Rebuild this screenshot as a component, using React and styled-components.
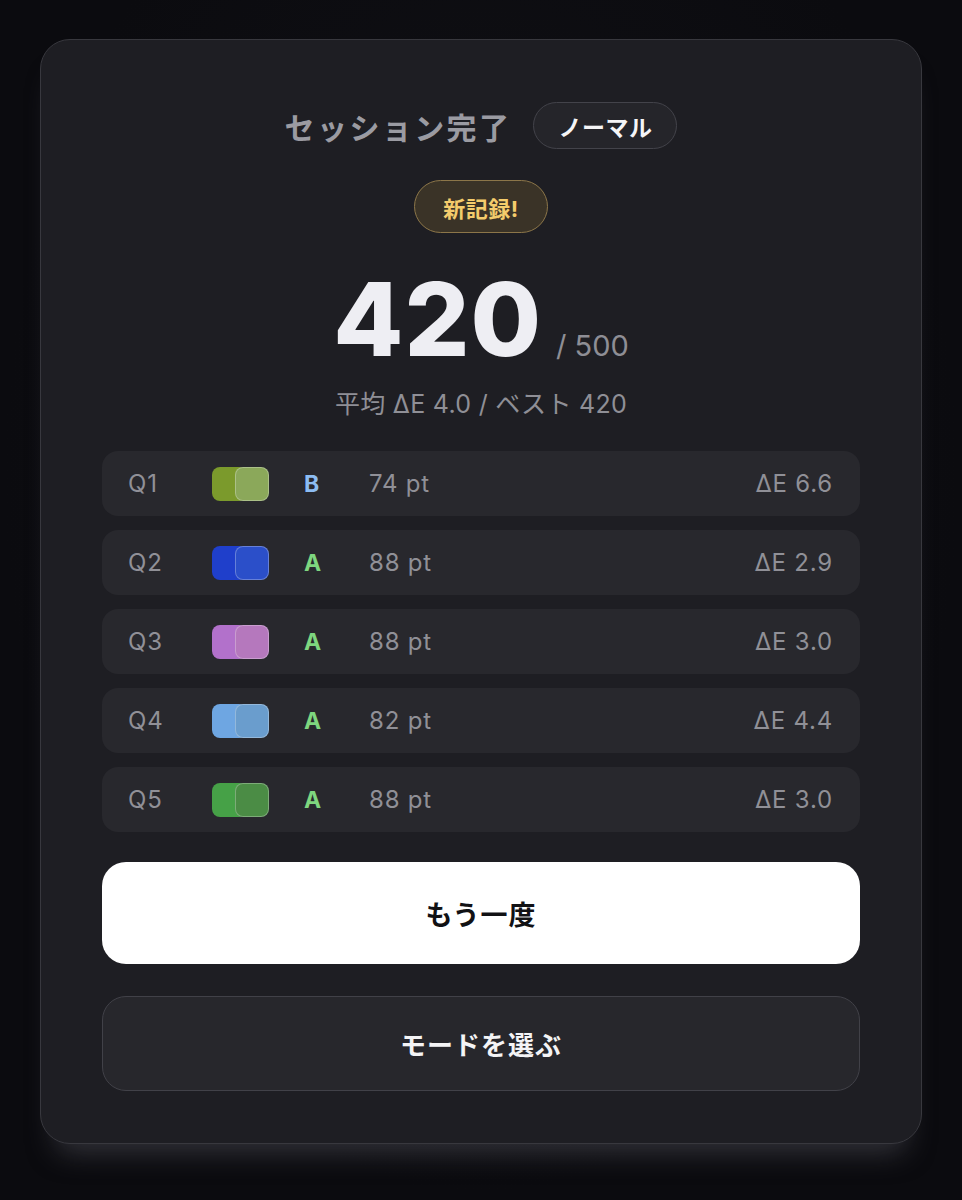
import React from 'react';
import styled, { createGlobalStyle } from 'styled-components';

const results = [
  { q: 'Q1', target: '#7b9a2c', guess: '#8ba85a', grade: 'B', pts: 74, de: '6.6' },
  { q: 'Q2', target: '#1f3fcb', guess: '#2b4fc9', grade: 'A', pts: 88, de: '2.9' },
  { q: 'Q3', target: '#b271cb', guess: '#b578bd', grade: 'A', pts: 88, de: '3.0' },
  { q: 'Q4', target: '#6ea6e2', guess: '#6a9dcd', grade: 'A', pts: 82, de: '4.4' },
  { q: 'Q5', target: '#46a147', guess: '#4b8c45', grade: 'A', pts: 88, de: '3.0' },
];

const gradeColors = { A: '#7ed67f', B: '#8cbcf2' };

function App() {
  return (
    <>
      <GlobalStyle />
      <Page>
        <Card>
          <TitleRow>
            <Title>セッション完了</Title>
            <ModeBadge>ノーマル</ModeBadge>
          </TitleRow>
          <RecordBadge>新記録!</RecordBadge>
          <ScoreLine>
            <BigScore>420</BigScore>
            <MaxScore>/ 500</MaxScore>
          </ScoreLine>
          <Summary>平均 ΔE 4.0 / ベスト 420</Summary>
          <List>
            {results.map((r) => (
              <Row key={r.q}>
                <QLabel>{r.q}</QLabel>
                <Swatch>
                  <Chip style={{ background: r.target }} />
                  <GuessChip style={{ background: r.guess }} />
                </Swatch>
                <Grade $grade={r.grade}>{r.grade}</Grade>
                <Points>{r.pts} pt</Points>
                <Delta>ΔE {r.de}</Delta>
              </Row>
            ))}
          </List>
          <PrimaryButton>もう一度</PrimaryButton>
          <SecondaryButton>モードを選ぶ</SecondaryButton>
        </Card>
      </Page>
    </>
  );
}

export default App;

const GlobalStyle = createGlobalStyle`
  body {
    margin: 0;
    background: #0b0b0f;
    font-family: Inter, "Noto Sans CJK JP", sans-serif;
    color: #ececf0;
  }
`;

const Page = styled.div`
  padding: 39px 40px 55px;
  min-height: 1200px;
  box-sizing: border-box;
  background: radial-gradient(ellipse at 50% 40%, #111116 0%, #0b0b0f 70%);
`;

const Card = styled.div`
  background: #1e1e23;
  border: 1.5px solid #38383e;
  border-radius: 30px;
  padding: 62px 61px 52px;
  display: flex;
  flex-direction: column;
  align-items: center;
  box-shadow: 0 24px 28px -16px rgba(78, 78, 86, 0.6);
`;

const TitleRow = styled.div`
  display: flex;
  align-items: center;
  gap: 22px;
`;

const Title = styled.h1`
  margin: 0;
  font-size: 30px;
  font-weight: 700;
  color: #9b9ba2;
  letter-spacing: 2.4px;
`;

const ModeBadge = styled.span`
  display: inline-flex;
  align-items: center;
  height: 45px;
  padding: 0 24px;
  border-radius: 24px;
  background: #25252a;
  border: 1.5px solid #43434a;
  font-size: 23px;
  font-weight: 700;
  color: #f5f5f7;
  letter-spacing: 0.5px;
`;

const RecordBadge = styled.span`
  margin-top: 31px;
  display: inline-flex;
  align-items: center;
  height: 51px;
  padding: 0 28px;
  border-radius: 27px;
  background: #3a3327;
  border: 1.5px solid #8c7649;
  font-size: 22px;
  font-weight: 700;
  color: #f4cc6c;
  letter-spacing: 0.5px;
`;

const ScoreLine = styled.div`
  margin-top: 30px;
  display: flex;
  align-items: baseline;
  gap: 14px;
`;

const BigScore = styled.span`
  font-size: 102px;
  line-height: 112px;
  font-weight: 800;
  color: #eeeef3;
  letter-spacing: 1px;
`;

const MaxScore = styled.span`
  font-size: 29px;
  color: #8e8e95;
`;

const Summary = styled.div`
  margin-top: 9px;
  font-size: 25px;
  letter-spacing: 0.3px;
  color: #8f8f96;
`;

const List = styled.div`
  margin-top: 31px;
  width: 100%;
  display: flex;
  flex-direction: column;
  gap: 14px;
`;

const Row = styled.div`
  height: 65px;
  border-radius: 16px;
  background: #28282d;
  display: grid;
  grid-template-columns: 84px 92px 65px 1fr auto;
  align-items: center;
  padding: 0 27px 0 26px;
  font-size: 24px;
  letter-spacing: 0.8px;
  color: #909097;
`;

const QLabel = styled.span``;

const Swatch = styled.div`
  display: flex;
  width: 57px;
  height: 34px;
`;

const Chip = styled.div`
  width: 35px;
  height: 34px;
  border-radius: 8px;
  flex: none;
`;

const GuessChip = styled(Chip)`
  width: 34px;
  margin-left: -12px;
  box-sizing: border-box;
  border: 1.5px solid rgba(255, 255, 255, 0.28);
`;

const Grade = styled.span`
  font-weight: 700;
  font-size: 23px;
  letter-spacing: 0;
  color: ${(p) => gradeColors[p.$grade]};
`;

const Points = styled.span``;

const Delta = styled.span``;

const PrimaryButton = styled.button`
  margin-top: 30px;
  width: 100%;
  height: 102px;
  border: none;
  border-radius: 24px;
  background: #ffffff;
  color: #111114;
  font-family: inherit;
  font-size: 27px;
  font-weight: 700;
  letter-spacing: 1px;
`;

const SecondaryButton = styled.button`
  margin-top: 32px;
  width: 100%;
  height: 95px;
  border: 1.5px solid #414148;
  border-radius: 24px;
  background: #27272c;
  color: #f4f4f6;
  font-family: inherit;
  font-size: 26px;
  font-weight: 700;
  letter-spacing: 1px;
`;
